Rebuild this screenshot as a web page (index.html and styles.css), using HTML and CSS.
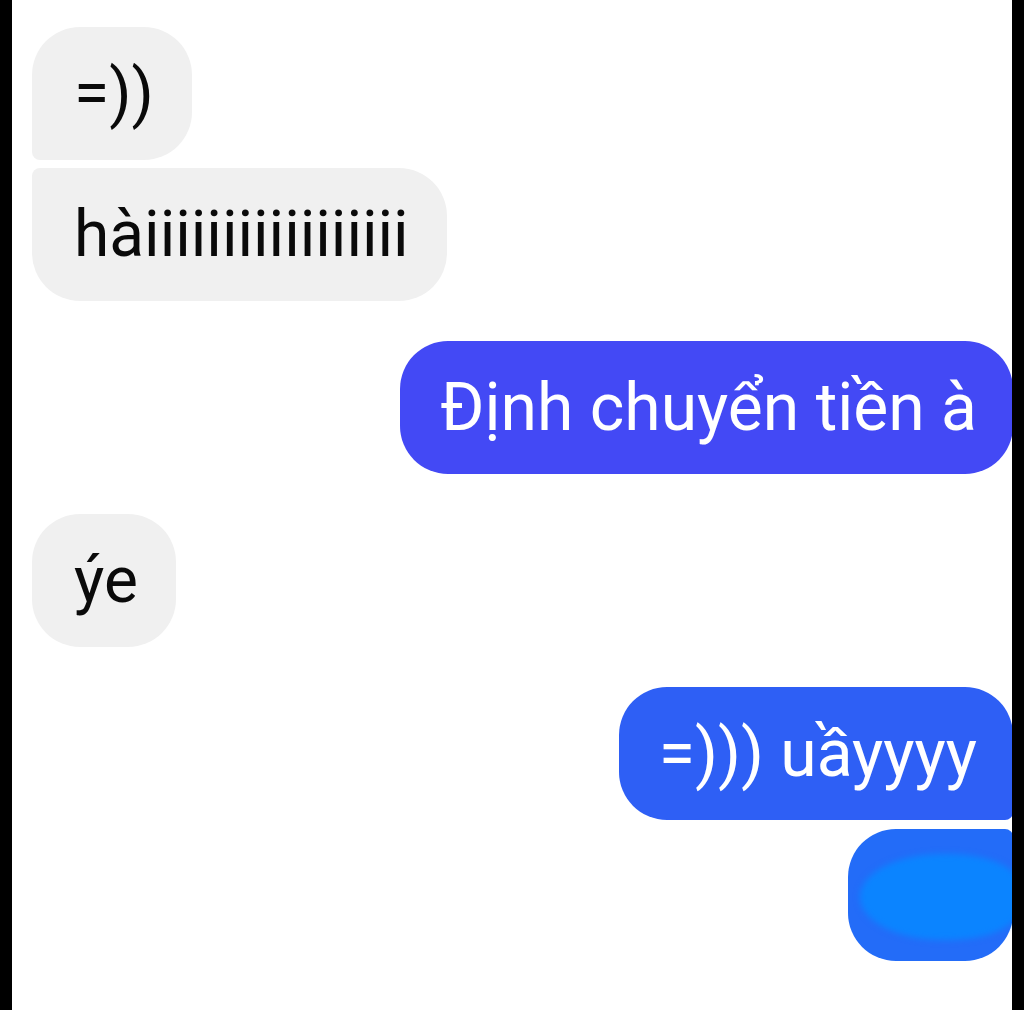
FILE: index.html
```html
<!DOCTYPE html>
<html lang="vi">
<head>
<meta charset="utf-8">
<title>Chat</title>
<link rel="stylesheet" href="styles.css">
</head>
<body>
<div class="screen">
  <div class="thread">
    <div class="group left">
      <div class="bubble in first">=))</div>
      <div class="bubble in last">hàiiiiiiiiiiiiiiiii</div>
    </div>
    <div class="group right">
      <div class="bubble out purple single">Định chuyển tiền à</div>
    </div>
    <div class="group left">
      <div class="bubble in single">ýe</div>
    </div>
    <div class="group right">
      <div class="bubble out blue first">=))) uầyyyy</div>
      <div class="bubble out sky last scribbled"><span class="blot"></span></div>
    </div>
  </div>
</div>
</body>
</html>
```
FILE: styles.css
```css
html, body {
  margin: 0;
  padding: 0;
  background: #000;
}
.screen {
  width: 1000px;
  height: 1010px;
  margin-left: 12px;
  background: #fff;
  overflow: hidden;
}
.thread {
  display: flex;
  flex-direction: column;
  gap: 40px;
  padding: 27px 0 0 20px;
}
.group {
  display: flex;
  flex-direction: column;
  gap: 8px;
}
.group.left { align-items: flex-start; }
.group.right { align-items: flex-end; margin-right: -1px; }
.bubble {
  font-family: Roboto, "Noto Sans", sans-serif;
  font-size: 64px;
  line-height: 75px;
  padding: 29px 38px 29px 42px;
  white-space: nowrap;
  border-radius: 48px;
}
.bubble.in {
  background: #f0f0f0;
  color: #0a0a0a;
}
.bubble.in.first { border-bottom-left-radius: 8px; }
.bubble.in.last { border-top-left-radius: 8px; }
.bubble.out {
  color: #fff;
  font-size: 66px;
  padding: 29px 36px 29px 40px;
}
.bubble.out.first { border-bottom-right-radius: 8px; }
.bubble.out.last { border-top-right-radius: 8px; }
.purple { background: #4349f5; }
.blue { background: #2e5ff5; }
.sky { background: #236cf8; }
.scribbled {
  position: relative;
  width: 165px;
  height: 132px;
  padding: 0;
  box-sizing: border-box;
  margin-top: 1px;
}
.blot {
  position: absolute;
  left: 12px;
  top: 25px;
  width: 165px;
  height: 86px;
  border-radius: 50% 45% 45% 50%;
  background: #0b84ff;
  filter: blur(3px);
}
```
